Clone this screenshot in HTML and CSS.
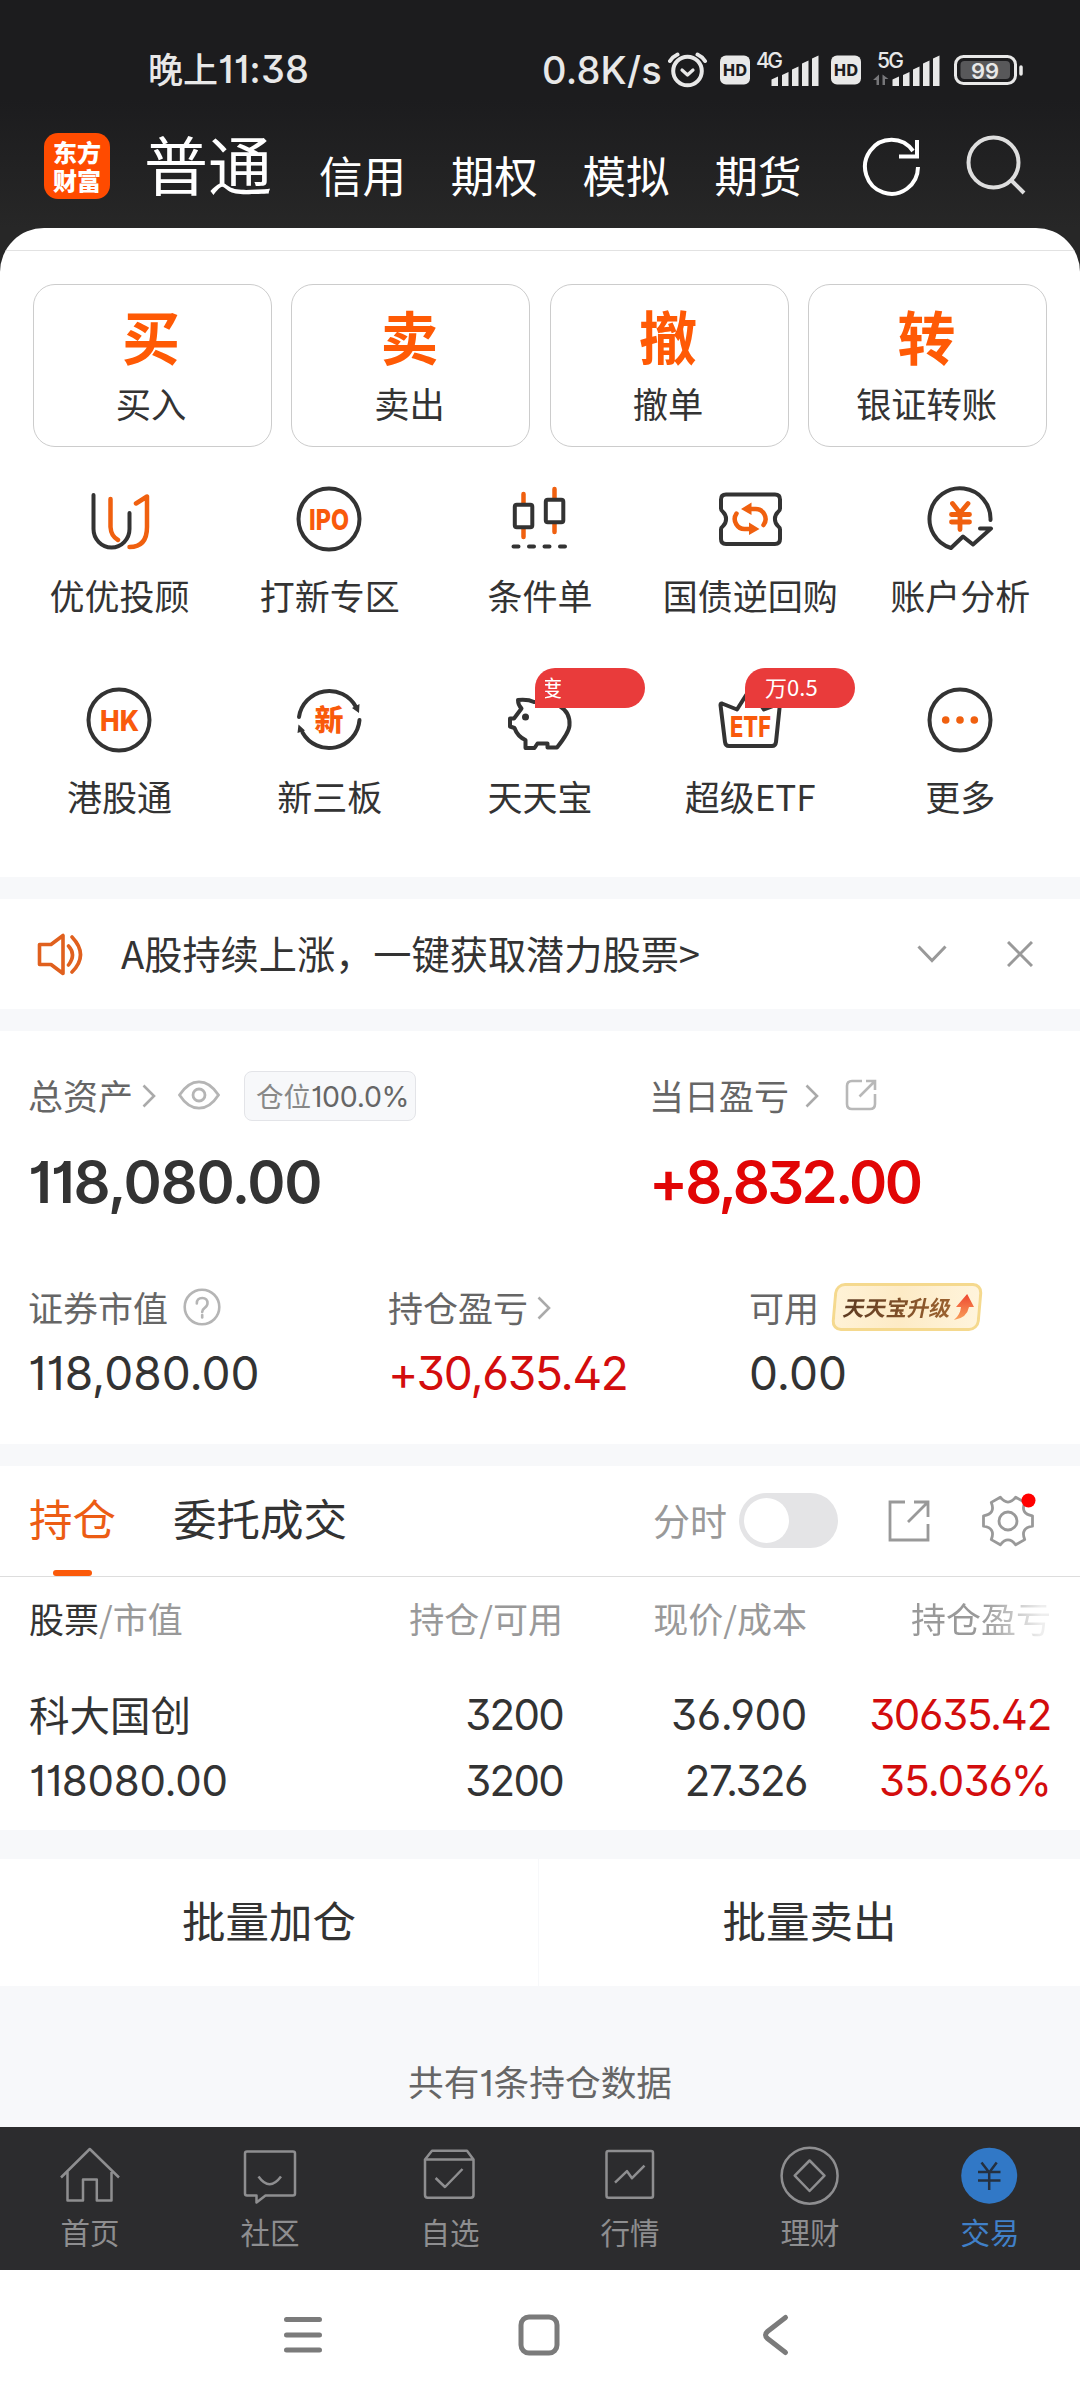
FILE: index.html
```html
<!DOCTYPE html>
<html lang="zh-CN">
<head>
<meta charset="utf-8">
<title>东方财富 交易</title>
<link rel="stylesheet" href="styles.css">
</head>
<body>
<div class="phone">
  <header class="top">
    <div class="status">
      <div class="clock">晚上<span class="num">11:38</span></div>
      <div class="speed num">0.8K/s</div>
      <svg class="status-icons" viewBox="668 40 358 60" width="358" height="60">
        <g fill="none" stroke="#e8e8e8" stroke-linecap="round" stroke-linejoin="round">
          <circle cx="687.5" cy="71" r="14.3" stroke-width="4"/>
          <path d="M682 70l5.500 5 5.500-5" stroke-width="3.200"/>
          <path d="M670 61q3-4.500 7.500-6.500M705 61q-3-4.500-7.500-6.500" stroke-width="4"/>
          <rect x="955.500" y="56.500" width="60" height="27" rx="8" stroke-width="3"/>
          <path d="M1021 67v7" stroke-width="3.500"/>
        </g>
        <g fill="#e8e8e8">
          <rect x="720" y="55.500" width="30" height="29" rx="6"/>
          <rect x="831" y="55.500" width="30" height="29" rx="6"/>
          <path d="M771.500 79.500l6.500-3v9.500h-6.500zM782 75l6.500-3v14h-6.500zM792 69.500l6.500-3v19.500h-6.500zM802 63.500l6.500-3v25.500h-6.500zM812 58.500l6.500-3v30.500h-6.500z"/>
          <path d="M892.500 79.500l6.500-3v9.500h-6.500zM903 75l6.500-3v14h-6.500zM913 69.500l6.500-3v19.500h-6.500zM923 63.500l6.500-3v25.500h-6.500zM933 58.500l6.500-3v30.500h-6.500z"/>
          <rect x="960.500" y="61" width="49.500" height="18" rx="4" fill="#58585a"/>
          <text class="s-net" x="756" y="68" textLength="27">4G</text>
          <text class="s-net" x="877" y="68" textLength="27">5G</text>
          <text class="s-bat" x="985" y="78.500" text-anchor="middle">99</text>
        </g>
        <path d="M873 80l6-5.500v10.500h-2.500v-5zM888.500 79l-6-4.500v10.500h2.500v-6z" fill="#77777a"/>
        <g class="s-hd"><text x="723" y="75.500" textLength="24">HD</text><text x="834" y="75.500" textLength="24">HD</text></g>
      </svg>
    </div>
    <div class="nav">
      <div class="logo"><span>东方</span><span>财富</span></div>
      <div class="nav-main">普通</div>
      <nav class="nav-list"><span>信用</span><span>期权</span><span>模拟</span><span>期货</span></nav>
      <svg class="ic-refresh" width="64" height="64" viewBox="0 0 64 64" fill="none" stroke="#fff" stroke-width="4"><path d="M58 33A26.500 27 0 1 1 53 17"/><path d="M57 6v16.500h-18"/></svg>
      <svg class="ic-search" width="64" height="64" viewBox="0 0 64 64" fill="none" stroke="#dedede" stroke-width="4"><circle cx="28.500" cy="28.500" r="25"/><path d="M46 46l13 13"/></svg>
    </div>
  </header>

  <main>
    <section class="panel">
      <div class="rule"></div>
      <div class="cards">
        <div class="card"><b>买</b><span>买入</span></div>
        <div class="card"><b>卖</b><span>卖出</span></div>
        <div class="card"><b>撤</b><span>撤单</span></div>
        <div class="card"><b>转</b><span>银证转账</span></div>
      </div>
      <div class="grid">
        <div class="tile"><svg class="ic" viewBox="0 0 72 72"><path d="M10.500 12v34a18 18.500 0 0 0 36 0V30"/><path class="o" d="M27.500 16v28q.5 9 7.500 13M53 20.500l11-7V44q0 20-17.500 20"/></svg><span>优优投顾</span></div>
        <div class="tile"><svg class="ic" viewBox="0 0 72 72"><circle cx="36" cy="36" r="30.500"/><text class="word" x="16" y="46.500" textLength="40" lengthAdjust="spacingAndGlyphs">IPO</text></svg><span>打新专区</span></div>
        <div class="tile"><svg class="ic" viewBox="0 0 72 72"><path class="o" d="M20.500 11v9M20.500 46v8M51.500 6v9M51.500 41v8"/><rect x="11.800" y="21.800" width="17.500" height="22.500" rx="2"/><rect x="42.800" y="16.800" width="17.500" height="22.500" rx="2"/><path d="M10.500 63.500h5M26 63.500h5M41.500 63.500h5M57 63.500h5"/></svg><span>条件单</span></div>
        <div class="tile"><svg class="ic" viewBox="0 0 72 72"><path d="M12 11.500h49q5 0 5 5v9q0 2-2 3.500a9.500 9.500 0 0 0 0 14q2 1.500 2 3.500v9.500q0 5-5 5H12q-5 0-5-5v-9.500q0-2 2-3.500a9.500 9.500 0 0 0 0-14q-2-1.500-2-3.500v-9q0-5 5-5z"/><path class="o" d="M37 26h4a10 10 0 0 1 8.500 16M36 46h-4a10 10 0 0 1-9.500-15.500"/><path class="of" d="M27 26l10.500-6.500v12.500zM45.500 46L35 39.500v12.500z"/></svg><span>国债逆回购</span></div>
        <div class="tile"><svg class="ic" viewBox="0 0 72 72"><path d="M66.500 37A30.500 30.500 0 1 0 27 65l12-11.500 10 8L67 45.500H56"/><path class="o yen" d="M28.500 20.500L36 30l8-9.500M27.500 31.500h18M27.500 39h18M36 31v15.500"/></svg><span>账户分析</span></div>
        <div class="tile"><svg class="ic" viewBox="0 0 72 72"><circle cx="36" cy="36" r="30.500"/><text class="word" x="17" y="46.500" textLength="39" lengthAdjust="spacingAndGlyphs">HK</text></svg><span>港股通</span></div>
        <div class="tile"><svg class="ic" viewBox="0 0 72 72"><path d="M6 33a30.500 30.500 0 0 1 57-10M66.500 36a30.500 30.500 0 0 1-57 12.500"/><path class="kf" d="M59 24l7.500-4-.5 9zM12 46.500l-6.500-6-1 8.500z"/><text class="cjk" x="36" y="46.500" text-anchor="middle">新</text></svg><span>新三板</span></div>
        <div class="tile"><svg class="ic" viewBox="0 0 72 72"><path d="M31 18q-6-3-16-2 0 5 3.500 8.500L11 34.500H7v8l4.500 1.500q3 8.500 11 12v8h9l3-4.500h10v4h9.500q12-15 12.500-22 1-13-10-19.500-8-4-16-4z"/><circle class="kf" cx="22.500" cy="33" r="3.500"/></svg><i class="tag"><em>度</em></i><span>天天宝</span></div>
        <div class="tile"><svg class="ic" viewBox="0 0 72 72"><path d="M8 19.500l15 6L36 5l14 20.500 16-6-4 38.500q-.5 4-4 4H15q-3.500 0-4-4L6.500 21q0-2 1.500-1.500z"/><text class="word" x="16" y="53" textLength="41" lengthAdjust="spacingAndGlyphs">ETF</text></svg><i class="tag">万0.5</i><span>超级ETF</span></div>
        <div class="tile"><svg class="ic" viewBox="0 0 72 72"><circle cx="36" cy="36" r="30.500"/><g class="of"><circle cx="21.700" cy="36" r="3.800"/><circle cx="36" cy="36" r="3.800"/><circle cx="50.300" cy="36" r="3.800"/></g></svg><span>更多</span></div>
      </div>
    </section>

    <section class="notice">
      <svg width="52" height="48" viewBox="0 0 52 48" fill="none" stroke="#e0601e" stroke-width="3.600" stroke-linecap="round" stroke-linejoin="round"><path d="M4.500 14.500H16l12-9v38l-12-9H4.500zM33.500 16q8 8.500 0 19M37 7q17 18 0 35"/></svg>
      <p>A股持续上涨，一键获取潜力股票&gt;</p>
      <svg class="dn" width="30" height="20" viewBox="0 0 30 20" fill="none" stroke="#999" stroke-width="3"><path d="M1.500 2.500L15 16.500l13.500-14"/></svg>
      <svg class="cl" width="26" height="26" viewBox="0 0 26 26" fill="none" stroke="#999" stroke-width="3"><path d="M1 1l24 24M25 1L1 25"/></svg>
    </section>

    <section class="assets">
      <div class="two">
        <div>
          <div class="lab">总资产<svg class="gt g1" viewBox="0 0 14 24"><path d="M1.500 1.500L12 12 1.500 22.500"/></svg>
            <svg class="eye" width="42" height="30" viewBox="0 0 42 30" fill="none" stroke="#b5b5b5" stroke-width="2.800"><path d="M1.500 15Q10 1.800 21 1.800T40.500 15Q32 28.200 21 28.200T1.500 15z"/><circle cx="21" cy="15" r="6"/></svg>
            <span class="pos">仓位<b class="num">100.0%</b></span></div>
          <div class="big num">118,080.00</div>
        </div>
        <div>
          <div class="lab">当日盈亏<svg class="gt g2" viewBox="0 0 14 24"><path d="M1.500 1.500L12 12 1.500 22.500"/></svg>
            <svg class="ext" width="32" height="32" viewBox="0 0 32 32" fill="none" stroke="#b8b8b8" stroke-width="2.600"><path d="M17 2H7Q2 2 2 7v18q0 5 5 5h18q5 0 5-5V15M21 2h9v9M29.500 2.500l-15 15"/></svg></div>
          <div class="big num up">+8,832.00</div>
        </div>
      </div>
      <div class="three">
        <div><div class="lab">证券市值<svg class="help" width="38" height="38" viewBox="0 0 38 38"><circle cx="19" cy="19" r="17.300"/><path d="M13.800 15.500q0-5.500 5.400-5.500t5.300 5.300q0 2.700-2.800 4.500-2.500 1.700-2.500 4.200"/><path d="M19.200 27v2.500"/></svg></div><div class="mid num">118,080.00</div></div>
        <div><div class="lab">持仓盈亏<svg class="gt g3" viewBox="0 0 14 24"><path d="M1.500 1.500L12 12 1.500 22.500"/></svg></div><div class="mid num up">+30,635.42</div></div>
        <div><div class="lab">可用<span class="promo"><span>天天宝升级</span><svg width="20" height="26" viewBox="0 0 20 26"><defs><linearGradient id="ar" x1="0" y1="1" x2="0" y2="0"><stop offset="0" stop-color="#f9a05a"/><stop offset="1" stop-color="#ee4630"/></linearGradient></defs><path d="M12 0l8 13h-5q-1 11-14 13 6-5 6-13H2z" fill="url(#ar)"/></svg></span></div><div class="mid num">0.00</div></div>
      </div>
    </section>

    <section class="hold">
      <div class="tabs">
        <span class="tab on">持仓</span><span class="tab">委托成交</span>
        <span class="fs">分时</span><span class="toggle"></span>
        <svg class="share" width="44" height="44" viewBox="0 0 44 44" fill="none" stroke="#999" stroke-width="2.800"><path d="M18 3H3v38h38V25M27 3h14v15M40.500 3.500L21 23"/></svg>
        <svg class="gear" width="56" height="56" viewBox="-28 -28 56 56" fill="none" stroke="#999" stroke-width="2.800" stroke-linejoin="round"><path d="M24.500-5.200V5.200Q12.100 7 16.700 18.600L7.700 23.800Q0 14-7.700 23.800L-16.700 18.600Q-12.100 7-24.500 5.200V-5.200Q-12.100-7-16.700-18.600L-7.700-23.800Q0-14 7.700-23.800L16.700-18.600Q12.100-7 24.500-5.200z"/><circle r="9"/><circle cx="20.500" cy="-20.500" r="7" fill="#f00" stroke="none"/></svg>
      </div>
      <div class="tr th"><span><b>股票</b>/市值</span><span>持仓/可用</span><span>现价/成本</span><span class="fade">持仓盈亏</span></div>
      <div class="tr r1"><span class="name">科大国创</span><span class="num qty">3200</span><span class="num">36.900</span><span class="num up">30635.42</span></div>
      <div class="tr r2"><span class="num">118080.00</span><span class="num qty">3200</span><span class="num cost">27.326</span><span class="num up">35.036%</span></div>
    </section>

    <div class="batch"><span>批量加仓</span><span>批量卖出</span></div>
    <p class="count">共有<span class="num">1</span>条持仓数据</p>
  </main>

  <footer class="bar">
    <div><svg viewBox="0 0 64 64"><path d="M3 34.500L31.800 6 61 34.500M9.500 29v28.500H25V36.500h13.800v21h14.700V29"/></svg><span>首页</span></div>
    <div><svg viewBox="0 0 64 64"><path d="M9 8.500h46q2 0 2 2v40q0 2-2 2H27.500L18.500 59.500v-7H9q-2 0-2-2v-40q0-2 2-2zM20.500 33.500q11 15.500 22.500 0"/></svg><span>社区</span></div>
    <div><svg viewBox="0 0 64 64"><path d="M7 16.500L14 7.800h35l6.500 8.700V52q0 2.700-2.700 2.700H9.500Q7 54.700 7 52zM7 16.500h48.500M17.600 35l9.400 9 17.500-18"/></svg><span>自选</span></div>
    <div><svg viewBox="0 0 64 64"><rect x="8.500" y="8" width="46.500" height="46.700" rx="2"/><path d="M17 39.700l12-11.500 5 7 12.500-12.500"/></svg><span>行情</span></div>
    <div><svg viewBox="0 0 64 64"><circle cx="31.600" cy="32.700" r="28"/><path d="M31.600 17.500L46.500 32.700 31.600 48 16.700 32.700z"/></svg><span>理财</span></div>
    <div class="act"><svg viewBox="0 0 64 64"><circle cx="31.200" cy="32.700" r="28" fill="#3178c6" stroke="none"/><path d="M23.500 19.500L31.200 29.500l7.500-10M20 29h22.500M20 37.500h22.500M31.200 29v18" stroke="#25303f"/></svg><span>交易</span></div>
  </footer>

  <div class="sys">
    <svg width="44" height="44" viewBox="0 0 44 44"><path d="M5.500 6.500h33M5.500 22h33M5.500 37h33"/></svg>
    <svg width="44" height="44" viewBox="0 0 44 44"><rect x="4" y="4" width="36" height="36" rx="8"/></svg>
    <svg width="44" height="44" viewBox="0 0 44 44"><path d="M32.500 4.500L14.500 18.500q-4 3.500 0 7L32.500 39.500"/></svg>
  </div>
</div>
</body>
</html>
```
FILE: styles.css
```css
* { box-sizing: border-box; }
body { margin: 0; width: 1080px; background: #fff; color: #333; font-family: "Noto Sans CJK SC", sans-serif; font-size: 35px; }
p { margin: 0; }
svg { display: block; flex: none; }
.phone { width: 1080px; height: 2400px; overflow: hidden; }
.num { font-family: Inter, "Noto Sans CJK SC", sans-serif; font-feature-settings: "cv01", "cv02", "cv03", "cv04", "cv09"; }
.up { color: #d30d0d; }

.top { height: 272px; background: linear-gradient(#1c1c1e 0, #1c1c1e 100px, #272727 228px); margin-bottom: -44px; }
.status { height: 120px; padding: 20px 0 0 148px; display: flex; align-items: center; color: #e8e8e8; font-size: 35px; line-height: 60px; }
.clock { width: 394px; font-weight: 500; white-space: nowrap; margin-top: -3px; }
.clock .num { font-size: 38px; letter-spacing: .2px; }
.speed { width: 126px; font-size: 38px; font-weight: 500; white-space: nowrap; letter-spacing: .2px; }
.s-net { font: 500 21px Inter, sans-serif; }
.s-bat { font: 600 22px Inter, sans-serif; }
.s-hd { font: 800 16px Inter, sans-serif; fill: #1c1c1e; }
.nav { height: 92px; padding-left: 44px; display: flex; align-items: center; color: #fff; }
.logo { width: 66px; height: 66px; border-radius: 14px; background: #ff4b00; display: flex; flex-direction: column; align-items: center; justify-content: center; font-size: 24px; line-height: 28px; font-weight: 900; }
.nav-main { margin-left: 34px; font-size: 64px; line-height: 92px; width: 175px; margin-top: -8px; }
.nav-list { display: flex; gap: 44.800px; font-size: 43.500px; line-height: 60px; width: 541px; margin-top: 17px; }
.ic-search { margin-left: 41px; }

.panel { position: relative; height: 649px; background: #fff; border-radius: 44px 44px 0 0; overflow: hidden; }
.rule { height: 1px; margin-top: 22px; background: #e2e2e2; }
.cards { display: grid; grid-template-columns: repeat(4, 1fr); gap: 19.500px; padding: 33px 33px 0 32.500px; }
.card { height: 163px; border: 1px solid #ccc; border-radius: 22px; display: flex; flex-direction: column; align-items: center; }
.card b { color: #ff5a05; font-size: 58px; line-height: 64px; height: 64px; margin: 18px 2px 0 0; }
.card span { font-size: 35.300px; line-height: 50px; margin: 11px 2px 0 0; }
.grid { display: grid; grid-template-columns: repeat(5, 210.200px); grid-auto-rows: 201px; padding: 36px 0 0 14.500px; }
.tile { position: relative; display: flex; flex-direction: column; align-items: center; white-space: nowrap; }
.tile > span { line-height: 50px; margin-top: 15px; }
.ic { width: 72px; height: 72px; margin-right: 1px; fill: none; stroke: #333; stroke-width: 4; stroke-linecap: round; stroke-linejoin: round; overflow: visible; }
.ic .o { stroke: #f0600f; stroke-width: 4.500; }
.ic .yen { stroke-width: 4.800; }
.ic .of { fill: #f0600f; stroke: none; }
.ic .kf { fill: #333; stroke: none; }
.ic text { fill: #f95a0b; stroke: none; }
.word { font: 800 29px Inter, sans-serif; }
.cjk { font: 900 29px "Noto Sans CJK SC", sans-serif; }
.tag { position: absolute; left: 100px; top: -16px; width: 110px; height: 39.500px; border-radius: 20px 20px 20px 0; background: #e93b3b; color: #fff; font-style: normal; font-size: 22px; line-height: 37px; padding-left: 20px; overflow: hidden; }
.tag em { display: block; font-style: normal; width: 16px; overflow: hidden; margin-left: -10px; text-indent: -5px; }

main { background: linear-gradient(transparent 44px, #f7f8fa 44px); height: 1899px; }
.notice { margin-top: 22px; height: 110px; background: #fff; padding-left: 35px; display: flex; align-items: center; }
.notice p { font-size: 38.200px; margin: -3px 0 0 34px; width: 796px; line-height: 60px; white-space: nowrap; }
.cl { margin-left: 60px; }

.assets { margin-top: 22px; height: 413px; background: #fff; padding: 38px 0 0 28px; }
.lab { display: flex; align-items: center; color: #666; line-height: 52px; height: 52px; white-space: nowrap; }
.gt { width: 14px; height: 24px; margin-top: 2px; fill: none; stroke: #aaa; stroke-width: 2.600; }
.g1 { margin-left: 9px; } .g2 { margin-left: 16px; } .g3 { margin-left: 9px; }
.eye { margin-left: 22px; }
.pos { margin-left: 24px; width: 172px; height: 50px; margin-top: 1px; border: 1px solid #e3e4e8; border-radius: 8px; background: #f7f8fa; color: #888; font-size: 27.500px; line-height: 47px; padding-left: 11px; }
.pos b { font-weight: 400; color: #666; font-size: 28.500px; letter-spacing: -.3px; }
.ext { margin-left: 26px; }
.two { display: grid; grid-template-columns: 621px 1fr; height: 212px; }
.big { font-size: 58px; font-weight: 600; line-height: 70px; margin-top: 26px; white-space: nowrap; letter-spacing: -1.300px; }
.big.up { color: #e10505; letter-spacing: -2.700px; }
.three { display: grid; grid-template-columns: 360px 361px 1fr; }
.mid { font-size: 46px; line-height: 60px; margin-top: 10px; white-space: nowrap; }
.mid.up { letter-spacing: -1.300px; }
.help { margin-left: 15px; fill: none; stroke: #b5b5b5; stroke-width: 2.600; stroke-linecap: round; }
.promo { margin-left: 14px; width: 148px; height: 48px; transform: skewX(-5deg); border: 3px solid #f5d98e; border-radius: 10px; background: linear-gradient(90deg, #fff2d6, #fdebc6 45%, #fff4dc); display: flex; align-items: center; padding-left: 8px; font-size: 21.500px; font-weight: 700; color: #6f4425; }
.promo span { transform: skewX(-7deg); background: linear-gradient(90deg, #5e3b22, #9c622f); -webkit-background-clip: text; color: transparent; }
.promo svg { margin-left: 2px; }

.hold { margin-top: 22px; height: 364px; background: #fff; }
.tabs { height: 111px; border-bottom: 1px solid #ddd; display: flex; align-items: center; padding-left: 29px; }
.tab { font-size: 43.500px; line-height: 60px; height: 110px; padding-top: 22px; position: relative; white-space: nowrap; }
.tab + .tab { margin-left: 57px; width: 480px; }
.on { color: #ec5c14; }
.on::after { content: ""; position: absolute; left: 24px; bottom: 0; width: 39px; height: 6px; border-radius: 3px; background: #fb5a0a; }
.fs { color: #999; font-size: 37px; line-height: 60px; width: 86px; margin-top: -2px; }
.toggle { width: 99px; height: 55px; margin-top: -1px; border-radius: 28px; background: #e4e4e6; padding: 5px; }
.toggle::after { content: ""; display: block; width: 45px; height: 45px; border-radius: 50%; background: #fff; }
.share { margin-left: 49px; }
.gear { margin-left: 49px; }
.tr { display: grid; grid-template-columns: 263px 271px 244px 244px; padding-left: 29px; text-align: right; white-space: nowrap; font-size: 42px; line-height: 68px; height: 66px; letter-spacing: -.3px; }
.tr > :first-child { text-align: left; }
.tr .qty { letter-spacing: -1.700px; }
.tr .cost { letter-spacing: -1.500px; }
.tr .up { letter-spacing: -1.300px; }
.r2 .up { letter-spacing: -.900px; }
.th { font-size: 35px; color: #999; line-height: 80px; height: 104px; padding-top: 1px; letter-spacing: 0; }
.th b { font-weight: 400; color: #333; }
.fade { background: linear-gradient(90deg, #999 0 72%, #eee 96%); -webkit-background-clip: text; color: transparent; }
.name { font-size: 40.500px; letter-spacing: 0; line-height: 65px; }

.batch { margin-top: 29px; height: 127px; display: grid; grid-template-columns: 538px 541px; gap: 1px; text-align: center; font-size: 43.500px; line-height: 122px; }
.batch span { background: #fff; }
.count { text-align: center; color: #666; font-size: 35.700px; line-height: 60px; margin-top: 65px; }

.bar { height: 143px; background: #2c2c2e; display: grid; grid-template-columns: repeat(6, 1fr); color: #8e8e90; font-size: 29.500px; }
.bar div { display: flex; flex-direction: column; align-items: center; padding-top: 16px; }
.bar svg { width: 64px; height: 64px; fill: none; stroke: #8e8e90; stroke-width: 2.500; stroke-linejoin: round; }
.bar span { line-height: 40px; margin-top: 4px; }
.bar .act { color: #4080c8; }
.sys { height: 130px; background: #fff; display: flex; justify-content: center; align-items: center; gap: 192px; padding-right: 3px; }
.sys svg { fill: none; stroke: #7b7b7b; stroke-width: 5; stroke-linecap: round; }
```
